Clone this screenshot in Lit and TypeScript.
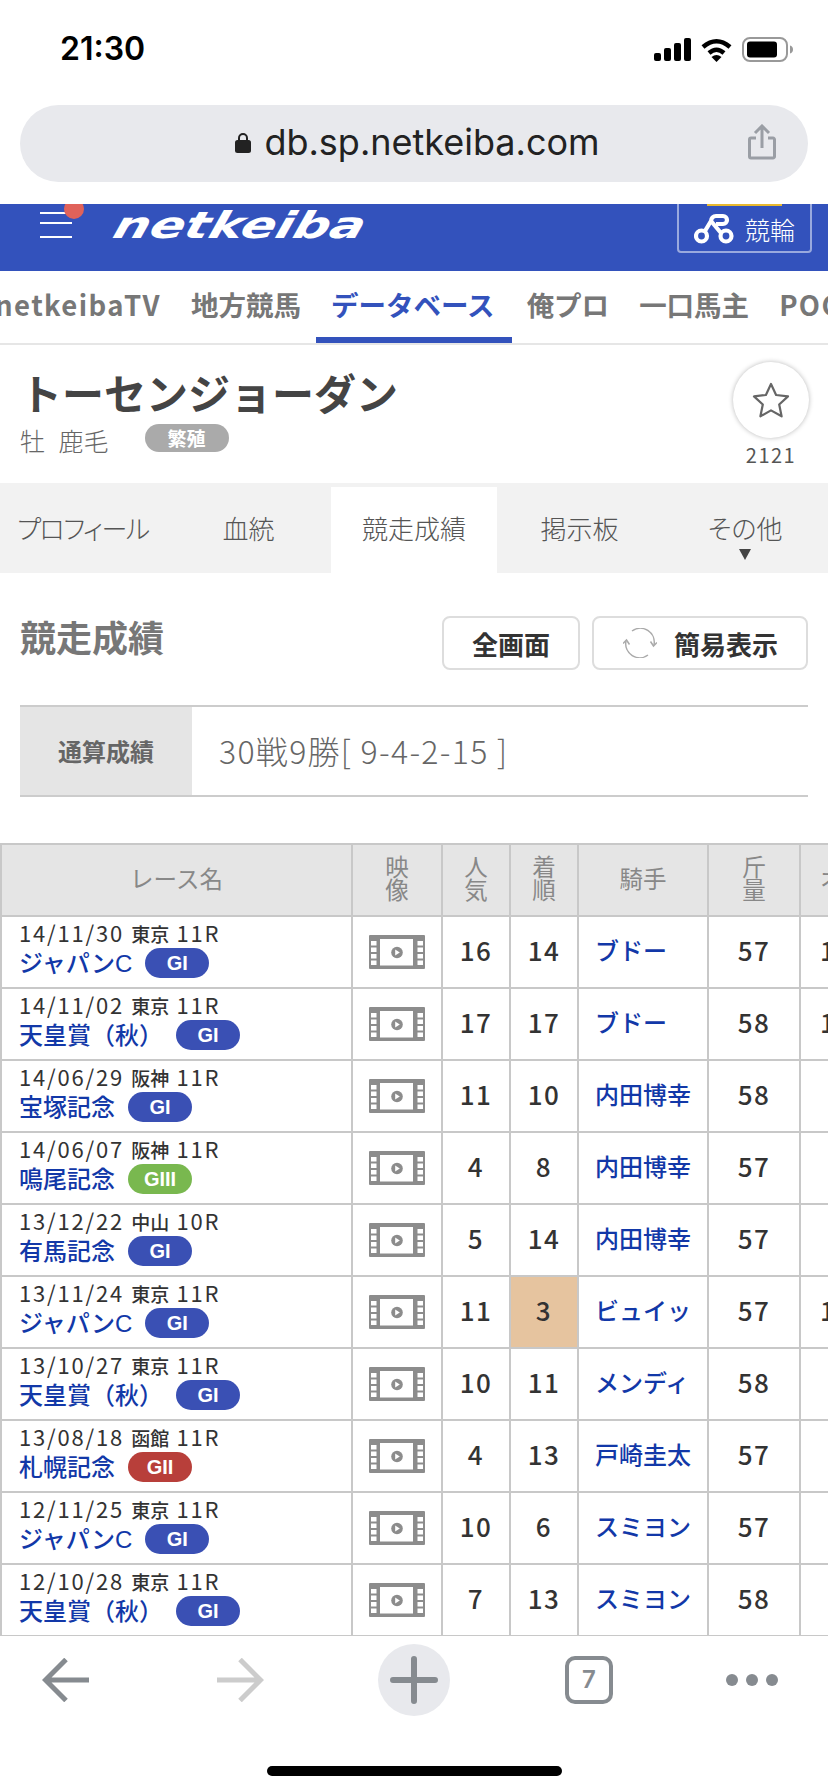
import { LitElement, html, css, svg } from 'lit';
import { customElement } from 'lit/decorators.js';

type Race = {
  date: string;
  place: string;
  num: string;
  name: string;
  grade: 'GI' | 'GII' | 'GIII';
  pop: string;
  rank: string;
  jockey: string;
  weight: string;
  odds: string;
  top?: boolean;
};

const RACES: Race[] = [
  { date: '14/11/30', place: '東京', num: '11R', name: 'ジャパンC', grade: 'GI', pop: '16', rank: '14', jockey: 'ブドー', weight: '57', odds: '1' },
  { date: '14/11/02', place: '東京', num: '11R', name: '天皇賞（秋）', grade: 'GI', pop: '17', rank: '17', jockey: 'ブドー', weight: '58', odds: '1' },
  { date: '14/06/29', place: '阪神', num: '11R', name: '宝塚記念', grade: 'GI', pop: '11', rank: '10', jockey: '内田博幸', weight: '58', odds: '' },
  { date: '14/06/07', place: '阪神', num: '11R', name: '鳴尾記念', grade: 'GIII', pop: '4', rank: '8', jockey: '内田博幸', weight: '57', odds: '' },
  { date: '13/12/22', place: '中山', num: '10R', name: '有馬記念', grade: 'GI', pop: '5', rank: '14', jockey: '内田博幸', weight: '57', odds: '' },
  { date: '13/11/24', place: '東京', num: '11R', name: 'ジャパンC', grade: 'GI', pop: '11', rank: '3', jockey: 'ビュイッ', weight: '57', odds: '1', top: true },
  { date: '13/10/27', place: '東京', num: '11R', name: '天皇賞（秋）', grade: 'GI', pop: '10', rank: '11', jockey: 'メンディ', weight: '58', odds: '' },
  { date: '13/08/18', place: '函館', num: '11R', name: '札幌記念', grade: 'GII', pop: '4', rank: '13', jockey: '戸崎圭太', weight: '57', odds: '' },
  { date: '12/11/25', place: '東京', num: '11R', name: 'ジャパンC', grade: 'GI', pop: '10', rank: '6', jockey: 'スミヨン', weight: '57', odds: '' },
  { date: '12/10/28', place: '東京', num: '11R', name: '天皇賞（秋）', grade: 'GI', pop: '7', rank: '13', jockey: 'スミヨン', weight: '58', odds: '' },
];

const NAV = ['netkeibaTV', '地方競馬', 'データベース', '俺プロ', '一口馬主', 'POG'];
const TABS = ['プロフィール', '血統', '競走成績', '掲示板', 'その他'];

const filmIcon = svg`
  <rect width="56" height="34" rx="1" fill="#8c8c8c"></rect>
  <rect x="11" y="4" width="33" height="26.5" fill="#fff"></rect>
  ${[6, 12.5, 19, 25.5].map(
    (y) => svg`
      <rect x="2" y=${y} width="5.5" height="4.5" fill="#fff"></rect>
      <rect x="48.5" y=${y} width="5.5" height="4.5" fill="#fff"></rect>`
  )}
  <circle cx="28" cy="17.5" r="5.8" fill="#8c8c8c"></circle>
  <path d="M26.2 14.6l4.6 2.9-4.6 2.9z" fill="#fff"></path>
`;

@customElement('app-root')
export class AppRoot extends LitElement {
  static styles = css`
    :host {
      display: block;
      width: 828px;
      height: 1792px;
      overflow: hidden;
      background: #fff;
      font-family: 'Noto Sans CJK JP', 'Liberation Sans', sans-serif;
      color: #333;
    }

    /* iOS chrome */
    .status {
      height: 105px;
      box-sizing: border-box;
      padding: 29px 34px 0 60px;
      display: flex;
      justify-content: space-between;
      align-items: flex-start;
    }
    .time {
      font: 600 32px/40px Inter, sans-serif;
      color: #000;
    }
    .status-icons {
      display: flex;
      align-items: center;
      gap: 10px;
      margin-top: 8px;
    }
    .status-icons svg {
      display: block;
    }
    .url {
      height: 77px;
      box-sizing: border-box;
      margin: 0 20px 22px;
      border-radius: 39px;
      background: #e8e9ed;
      position: relative;
      display: flex;
      align-items: center;
      justify-content: center;
      gap: 13px;
      padding: 0 0 3px 7px;
      font: 400 36px/1 Inter, sans-serif;
      color: #222;
    }
    .url .share {
      position: absolute;
      right: 32px;
      top: 19px;
    }

    /* site header */
    .site {
      height: 67px;
      background: #3352bc;
      position: relative;
      overflow: hidden;
    }
    .burger {
      position: absolute;
      left: 40px;
      top: 8px;
      width: 32px;
      height: 22px;
      border-top: 2px solid #fff;
      border-bottom: 2px solid #fff;
    }
    .burger::after {
      content: '';
      position: absolute;
      left: 0;
      right: 0;
      top: 8px;
      height: 2px;
      background: #fff;
    }
    .dot {
      position: absolute;
      left: 64px;
      top: -5px;
      width: 20px;
      height: 20px;
      border-radius: 50%;
      background: #e0625a;
    }
    .logo {
      position: absolute;
      left: 121px;
      top: 0;
      font: italic 700 37px/44px 'DejaVu Sans', sans-serif;
      color: #fff;
      transform-origin: left top;
      transform: scaleX(1.38) skewX(-12deg);
    }
    .keirin {
      position: absolute;
      left: 677px;
      top: -10px;
      width: 135px;
      height: 59px;
      box-sizing: border-box;
      border: 2px solid rgba(255, 255, 255, 0.5);
      border-radius: 4px;
      display: flex;
      align-items: center;
      padding: 10px 0 0 15px;
      gap: 11px;
      color: #fff;
      font-size: 25px;
      font-weight: 300;
    }
    .keirin::before {
      content: '';
      position: absolute;
      left: 28px;
      top: 8px;
      width: 75px;
      height: 2px;
      background: #e8b92f;
    }

    /* global nav */
    .nav {
      height: 74px;
      box-sizing: border-box;
      border-bottom: 2px solid #e6e6e6;
      display: flex;
      overflow: hidden;
    }
    .nav a {
      flex: none;
      padding: 0 15px;
      font-size: 27.5px;
      line-height: 66px;
      font-weight: 700;
      letter-spacing: 0;
      color: #777;
      height: 72px;
      box-sizing: border-box;
      white-space: nowrap;
    }
    .nav a:first-child {
      width: 176px;
      display: flex;
      justify-content: flex-end;
      letter-spacing: 1.4px;
    }
    .nav a:last-child {
      letter-spacing: 1.4px;
    }
    .nav a.on {
      padding-right: 17px;
      color: #3352bc;
      border-bottom: 6px solid #3352bc;
    }

    /* horse head */
    .horse {
      height: 138px;
      box-sizing: border-box;
      padding: 21px 18px 0 20px;
      display: flex;
      justify-content: space-between;
    }
    h1 {
      margin: 0;
      font-size: 42px;
      line-height: 52px;
      font-weight: 700;
      color: #444;
    }
    .meta {
      display: flex;
      align-items: center;
      font-size: 25px;
      line-height: 34px;
      color: #666;
      margin-top: 5px;
      font-weight: 300;
      word-spacing: 8px;
    }
    .badge {
      margin: -4px 0 0 36px;
      width: 84px;
      height: 28px;
      border-radius: 14px;
      background: #aaa;
      color: #fff;
      font-size: 19px;
      font-weight: 700;
      line-height: 28px;
      text-align: center;
    }
    .fav {
      width: 78px;
      margin-top: -4px;
      text-align: center;
      font-size: 20px;
      line-height: 26px;
      letter-spacing: 1.5px;
      color: #555;
    }
    .star {
      width: 76px;
      height: 76px;
      margin: 0 auto 4px;
      border-radius: 50%;
      background: #fff;
      box-shadow: 0 0 5px rgba(0, 0, 0, 0.28);
      display: flex;
      align-items: center;
      justify-content: center;
    }

    /* horse tabs */
    .tabs {
      height: 90px;
      background: #f2f2f2;
      display: flex;
    }
    .tabs a {
      flex: 1;
      position: relative;
      text-align: center;
      font-size: 26px;
      line-height: 90px;
      color: #555;
      font-weight: 300;
      font-feature-settings: 'palt';
    }
    .tabs a:first-child {
      letter-spacing: -1.5px;
    }
    .tabs a.on {
      background: #fff;
      margin-top: 4px;
      line-height: 82px;
    }
    .arrow {
      position: absolute;
      left: 50%;
      bottom: 13px;
      margin-left: -6px;
      border-left: 6px solid transparent;
      border-right: 6px solid transparent;
      border-top: 11px solid #444;
    }

    /* results block */
    .head {
      height: 132px;
      box-sizing: border-box;
      padding: 43px 20px 0;
      display: flex;
      align-items: flex-start;
    }
    h2 {
      margin: -2px auto 0 0;
      font-size: 36px;
      line-height: 44px;
      font-weight: 700;
      color: #777;
    }
    .btn {
      height: 54px;
      box-sizing: border-box;
      border: 2px solid #ddd;
      border-radius: 8px;
      display: flex;
      align-items: center;
      justify-content: center;
      font-size: 26px;
      font-weight: 700;
      color: #333;
    }
    .btn.full {
      width: 138px;
      margin-right: 12px;
    }
    .btn.simple {
      width: 216px;
      gap: 17px;
      padding-left: 29px;
      justify-content: flex-start;
    }
    .summary {
      height: 92px;
      margin: 0 20px;
      box-sizing: border-box;
      border-top: 2px solid #ccc;
      border-bottom: 2px solid #ccc;
      display: flex;
      align-items: stretch;
    }
    .summary b {
      width: 172px;
      background: #e5e5e5;
      color: #666;
      font-size: 24px;
      font-weight: 700;
      line-height: 88px;
      text-align: center;
    }
    .summary span {
      padding-left: 27px;
      font-size: 32px;
      line-height: 86px;
      letter-spacing: 1.3px;
      font-weight: 300;
      color: #666;
    }

    /* table */
    .wrap {
      margin-top: 46px;
      height: 793px;
      overflow: hidden;
    }
    table {
      table-layout: fixed;
      width: 901px;
      border-collapse: separate;
      border-spacing: 0;
      border-top: 2px solid #c8c8c8;
    }
    th,
    td {
      height: 72px;
      box-sizing: border-box;
      padding: 0 0 6px;
      border-right: 2px solid #c8c8c8;
      border-bottom: 2px solid #c8c8c8;
      text-align: center;
      vertical-align: middle;
    }
    th:first-child,
    td:first-child {
      border-left: 2px solid #c8c8c8;
    }
    th {
      background: #e5e5e5;
      color: #888;
      font-size: 23.5px;
      line-height: 23px;
      font-weight: 400;
      padding-bottom: 4px;
    }
    td {
      font-size: 26px;
      font-weight: 500;
      letter-spacing: 1.5px;
      color: #333;
    }
    td.race {
      text-align: left;
      padding: 0 0 8px 17px;
      letter-spacing: 0;
    }
    .when {
      font-size: 22px;
      line-height: 28px;
      font-weight: 400;
      letter-spacing: 1.8px;
      color: #333;
      white-space: nowrap;
    }
    .when small {
      font-size: 19px;
      font-weight: 500;
      letter-spacing: 0;
      margin: 0 3px;
    }
    .name {
      display: flex;
      align-items: center;
      height: 30px;
      font-family: 'Liberation Sans', 'Noto Sans CJK JP', sans-serif;
      font-size: 24px;
      font-weight: 500;
      color: #1238a8;
      white-space: nowrap;
    }
    .name em {
      font-style: normal;
      margin-top: -4px;
    }
    .grade {
      margin-left: 13px;
      width: 64px;
      height: 30px;
      border-radius: 15px;
      background: #3a50b4;
      color: #fff;
      font: 700 20px/30px 'Liberation Sans', sans-serif;
      text-align: center;
    }
    .grade.GII {
      background: #b83f3a;
    }
    .grade.GIII {
      background: #79b84f;
    }
    td.film {
      padding: 0;
    }
    td.film svg {
      display: block;
      margin: 0 auto;
    }
    td.top {
      background: #e6c49f;
    }
    td.jockey {
      text-align: left;
      padding-left: 16px;
      font-size: 24px;
      letter-spacing: 0;
      color: #1238a8;
      white-space: nowrap;
    }
    th.odds,
    td.odds {
      text-align: left;
      padding-left: 19px;
      white-space: nowrap;
    }

    /* browser toolbar */
    .bar {
      position: relative;
      background: #fff;
      height: 156px;
    }
    .tools {
      padding-top: 8px;
      display: grid;
      grid-template-columns: repeat(5, 174px);
      justify-content: center;
      align-items: center;
      height: 72px;
    }
    .tools > * {
      justify-self: center;
    }
    .plus {
      width: 72px;
      height: 72px;
      border-radius: 50%;
      background: #e8e9ed;
      display: flex;
      align-items: center;
      justify-content: center;
    }
    .count {
      width: 48px;
      height: 48px;
      margin-left: 2px;
      box-sizing: border-box;
      border: 4px solid #868b90;
      border-radius: 10px;
      text-align: center;
      font: 600 24px/40px Inter, sans-serif;
      color: #868b90;
    }
    .dots {
      display: flex;
      gap: 8px;
      margin-right: 20px;
    }
    .dots i {
      width: 12px;
      height: 12px;
      border-radius: 50%;
      background: #868b90;
    }
    .home {
      width: 295px;
      height: 10px;
      margin: 50px auto 0;
      border-radius: 5px;
      background: #000;
    }
  `;

  renderRow(r: Race) {
    return html`
      <tr>
        <td class="race">
          <div class="when">${r.date}<small> ${r.place} </small>${r.num}</div>
          <div class="name"><em>${r.name}</em><span class="grade ${r.grade}">${r.grade}</span></div>
        </td>
        <td class="film">
          <svg width="56" height="34" viewBox="0 0 56 34">${filmIcon}</svg>
        </td>
        <td>${r.pop}</td>
        <td class=${r.top ? 'top' : ''}>${r.rank}</td>
        <td class="jockey">${r.jockey}</td>
        <td>${r.weight}</td>
        <td class="odds">${r.odds}</td>
      </tr>
    `;
  }

  render() {
    return html`
      <div class="status">
        <span class="time">21:30</span>
        <div class="status-icons">
          <svg width="37" height="23" viewBox="0 0 37 23" fill="#000">
            <rect x="0" y="15" width="7" height="8" rx="2"></rect>
            <rect x="10" y="10" width="7" height="13" rx="2"></rect>
            <rect x="20" y="5" width="7" height="18" rx="2"></rect>
            <rect x="30" y="0" width="7" height="23" rx="2"></rect>
          </svg>
          <svg width="31" height="24" viewBox="0 0 31 24">
            <path d="M2 9Q15.500-2.500 29 9" fill="none" stroke="#000" stroke-width="4.500"></path>
            <path d="M8 15Q15.500 8.500 23 15" fill="none" stroke="#000" stroke-width="4.500"></path>
            <path d="M10.500 19Q15.500 15 20.500 19L15.500 24Z"></path>
          </svg>
          <svg width="52" height="25" viewBox="0 0 52 25">
            <rect x="1" y="1" width="44" height="23" rx="7" fill="none" stroke="#999" stroke-width="2"></rect>
            <rect x="5" y="4.500" width="30" height="16" rx="3"></rect>
            <path d="M48 8.500c2 .5 3 2 3 4s-1 3.500-3 4z" fill="#999"></path>
          </svg>
        </div>
      </div>

      <div class="url">
        <svg width="16" height="21" viewBox="0 0 16 21">
          <path d="M4 9V6a4 4 0 0 1 8 0v3" fill="none" stroke="#222" stroke-width="2"></path>
          <rect y="8" width="16" height="13" rx="2.500" fill="#222"></rect>
        </svg>
        <span>db.sp.netkeiba.com</span>
        <svg class="share" width="28" height="36" viewBox="0 0 28 36" fill="none" stroke="#9a9ea5" stroke-width="3">
          <path d="M8 14H3a1.500 1.500 0 0 0-1.500 1.500v17A1.500 1.500 0 0 0 3 34h22a1.500 1.500 0 0 0 1.500-1.500v-17A1.500 1.500 0 0 0 25 14h-5"></path>
          <path d="M14 24V2M7 9l7-7 7 7"></path>
        </svg>
      </div>

      <div class="site">
        <div class="burger"></div>
        <div class="dot"></div>
        <div class="logo">netkeiba</div>
        <div class="keirin">
          <svg width="40" height="31" viewBox="0 0 40 31" fill="none" stroke="#fff" stroke-width="4.200">
            <circle cx="7.500" cy="23" r="5.500"></circle>
            <circle cx="32" cy="23" r="5.500"></circle>
            <path d="M11 18L17 8A5 5 0 0 1 22 3H29A4 4 0 0 1 29 11H22"></path>
            <path d="M17 8L27 20"></path>
          </svg>
          競輪
        </div>
      </div>

      <nav class="nav">
        ${NAV.map((n) => html`<a class=${n === 'データベース' ? 'on' : ''}>${n}</a>`)}
      </nav>

      <section class="horse">
        <div>
          <h1>トーセンジョーダン</h1>
          <div class="meta">牡 鹿毛<span class="badge">繁殖</span></div>
        </div>
        <div class="fav">
          <div class="star">
            <svg width="38" height="36" viewBox="0 0 38 36">
              <path
                d="M19 2l5.100 11 11.900 1.400-8.800 8.100 2.400 11.800L19 28.400 8.400 34.300l2.400-11.800L2 14.400 13.900 13z"
                fill="none"
                stroke="#666"
                stroke-width="2.200"
                stroke-linejoin="round"
              ></path>
            </svg>
          </div>
          2121
        </div>
      </section>

      <div class="tabs">
        ${TABS.map(
          (t) => html`<a class=${t === '競走成績' ? 'on' : ''}>${t}${t === 'その他' ? html`<i class="arrow"></i>` : ''}</a>`
        )}
      </div>

      <div class="head">
        <h2>競走成績</h2>
        <div class="btn full">全画面</div>
        <div class="btn simple">
          <svg width="34" height="30" viewBox="0 0 34 30" fill="none" stroke="#aaa" stroke-width="1.500">
            <path d="M9 3A14 14 0 0 1 31 17"></path>
            <path d="M25 27A14 14 0 0 1 3 13"></path>
            <path d="M27.500 13.500L30.500 18L34 14.500"></path>
            <path d="M6.500 16.500L3.500 12L0 15.500"></path>
          </svg>
          簡易表示
        </div>
      </div>

      <div class="summary">
        <b>通算成績</b>
        <span>30戦9勝[ 9-4-2-15 ]</span>
      </div>

      <div class="wrap">
        <table>
          <colgroup>
            <col style="width:353px" />
            <col style="width:90px" />
            <col style="width:68px" />
            <col style="width:68px" />
            <col style="width:130px" />
            <col style="width:92px" />
            <col style="width:100px" />
          </colgroup>
          <thead>
            <tr>
              <th>レース名</th>
              <th>映<br />像</th>
              <th>人<br />気</th>
              <th>着<br />順</th>
              <th>騎手</th>
              <th>斤<br />量</th>
              <th class="odds">オッズ</th>
            </tr>
          </thead>
          <tbody>
            ${RACES.map((r) => this.renderRow(r))}
          </tbody>
        </table>
      </div>

      <div class="bar">
        <div class="tools">
          <svg width="48" height="44" viewBox="0 0 48 44" fill="none" stroke="#868b90" stroke-width="5">
            <path d="M47 22H4M24 1.500L3.500 22 24 42.500"></path>
          </svg>
          <svg width="48" height="44" viewBox="0 0 48 44" fill="none" stroke="#ccc" stroke-width="5">
            <path d="M1 22H44M24 1.500L44.500 22 24 42.500"></path>
          </svg>
          <div class="plus">
            <svg width="48" height="48" viewBox="0 0 48 48" stroke="#868b90" stroke-width="6" stroke-linecap="round">
              <path d="M3 24H45M24 3V45"></path>
            </svg>
          </div>
          <div class="count">7</div>
          <div class="dots"><i></i><i></i><i></i></div>
        </div>
        <div class="home"></div>
      </div>
    `;
  }
}
